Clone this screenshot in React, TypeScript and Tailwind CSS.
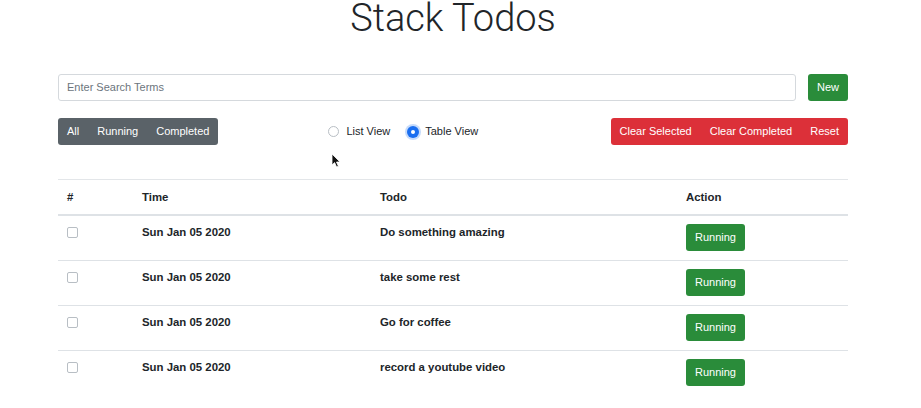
import React from "react";

const rows = [
  "Do something amazing",
  "take some rest",
  "Go for coffee",
  "record a youtube video",
];

export default function App() {
  return (
    <div
      className="relative w-[921px] h-[408px] overflow-hidden bg-white text-[#212529]"
      style={{ fontFamily: '"Liberation Sans", Arial, sans-serif' }}
    >
      <div className="ml-[58px] w-[790px]">
        <h1
          className="mt-[-1px] text-center text-[38px] leading-[38px] font-light text-[#212529]"
          style={{ fontFamily: 'Roboto, "Liberation Sans", sans-serif' }}
        >
          Stack Todos
        </h1>

        <div className="mt-[37px] flex items-center gap-[12px]">
          <div className="flex h-[27px] flex-1 items-center rounded-[3px] border border-[#d5d9dd] px-[8px] text-[11px] text-[#6c757d]">
            Enter Search Terms
          </div>
          <button className="h-[27px] rounded-[3px] bg-[#2a8c3a] px-[9px] text-[11px] text-white">
            New
          </button>
        </div>

        <div className="mt-[17px] flex h-[27px] items-center">
          <div className="flex h-[27px] items-stretch rounded-[3px] bg-[#5a6268] text-[11px] text-white">
            <span className="flex items-center px-[9px]">All</span>
            <span className="flex items-center px-[9px]">Running</span>
            <span className="flex items-center px-[9px]">Completed</span>
          </div>

          <div className="ml-[110px] flex items-center text-[11px]">
            <span className="h-[11px] w-[11px] rounded-full border border-[#b8bec4] bg-white" />
            <span className="ml-[7px]">List View</span>
            <span className="ml-[17px] flex h-[12px] w-[12px] items-center justify-center rounded-full bg-[#1a6ef0] shadow-[0_0_0_2px_rgba(26,110,240,0.25)]">
              <span className="h-[4px] w-[4px] rounded-full bg-white" />
            </span>
            <span className="ml-[6px]">Table View</span>
          </div>

          <div className="ml-auto flex h-[27px] items-stretch rounded-[3px] bg-[#dc3039] text-[11px] text-white">
            <span className="flex items-center px-[9px]">Clear Selected</span>
            <span className="flex items-center px-[9px]">Clear Completed</span>
            <span className="flex items-center px-[9px]">Reset</span>
          </div>
        </div>

        <table className="mt-[34px] w-full border-collapse text-[11.4px]">
          <thead>
            <tr className="border-t border-[#e3e6e9] border-b-2 border-b-[#dee2e6]">
              <th className="w-[75px] px-[9px] py-[8.5px] text-left font-bold leading-[17px]">#</th>
              <th className="w-[238px] px-[9px] py-[8.5px] text-left font-bold leading-[17px]">Time</th>
              <th className="w-[306px] px-[9px] py-[8.5px] text-left font-bold leading-[17px]">Todo</th>
              <th className="px-[9px] py-[8.5px] text-left font-bold leading-[17px]">Action</th>
            </tr>
          </thead>
          <tbody>
            {rows.map((t, i) => (
              <tr key={i} className={i < rows.length - 1 ? "border-b border-[#dee2e6]" : ""}>
                <td className="px-[9px] pt-[8px] pb-[9px] align-top">
                  <div className="mt-[3px] h-[11px] w-[11px] rounded-[2px] border border-[#b8bec4] bg-white" />
                </td>
                <td className="px-[9px] pt-[8px] pb-[9px] align-top font-bold leading-[17px]">Sun Jan 05 2020</td>
                <td className="px-[9px] pt-[8px] pb-[9px] align-top font-bold leading-[17px]">{t}</td>
                <td className="px-[9px] pt-[8px] pb-[9px] align-top">
                  <button className="h-[27px] rounded-[3px] bg-[#2a8c3a] px-[9px] text-[11px] font-normal text-white">
                    Running
                  </button>
                </td>
              </tr>
            ))}
          </tbody>
        </table>
      </div>

      <svg
        className="absolute left-[331px] top-[153px]"
        width="10"
        height="15"
        viewBox="0 0 10 15"
      >
        <path d="M1 1 L1 12 L3.6 9.6 L5.6 14 L7.4 13.2 L5.5 9 L9 9 Z" fill="#111" stroke="#fff" strokeWidth="0.8" />
      </svg>
    </div>
  );
}
